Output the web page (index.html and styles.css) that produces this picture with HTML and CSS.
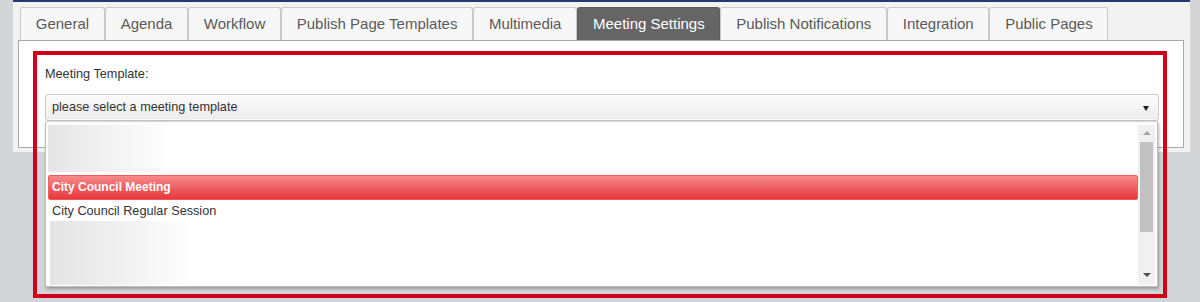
FILE: index.html
```html
<!DOCTYPE html>
<html lang="en">
<head>
<meta charset="utf-8">
<title>Meeting Settings</title>
<link rel="stylesheet" href="styles.css">
</head>
<body>
<div class="page">
  <div class="panel">
    <ul class="tabs">
      <li class="tab">General</li>
      <li class="tab">Agenda</li>
      <li class="tab">Workflow</li>
      <li class="tab">Publish Page Templates</li>
      <li class="tab">Multimedia</li>
      <li class="tab active">Meeting Settings</li>
      <li class="tab">Publish Notifications</li>
      <li class="tab">Integration</li>
      <li class="tab">Public Pages</li>
    </ul>
    <div class="tab-content">
      <div class="form">
        <div class="label">Meeting Template:</div>
        <div class="select-wrap">
          <div class="select">
            <span class="select-text">please select a meeting template</span>
            <span class="caret"></span>
          </div>
          <div class="dropdown">
            <div class="list">
              <div class="item blur blur-top"></div>
              <div class="item highlight">City Council Meeting</div>
              <div class="item">City Council Regular Session</div>
              <div class="item blur blur-bottom"></div>
            </div>
            <div class="scrollbar">
              <span class="sb-up"></span>
              <span class="sb-thumb"></span>
              <span class="sb-spacer"></span>
              <span class="sb-down"></span>
            </div>
          </div>
        </div>
      </div>
    </div>
  </div>
  <div class="annotation"></div>
</div>
</body>
</html>
```

FILE: styles.css
```css
* {
  box-sizing: border-box;
}

html, body {
  margin: 0;
  padding: 0;
}

body {
  background: #d3d4d6;
  font-family: "Liberation Sans", Arial, sans-serif;
  width: 1200px;
  height: 302px;
  overflow: hidden;
}

.page {
  position: relative;
  width: 1200px;
  height: 302px;
}

.panel {
  margin-left: 13px;
  width: 1177px;
  border-top: 2px solid #253a70;
  background: #f2f2f2;
  padding: 5px 6px 4px 5px;
}

.tabs {
  list-style: none;
  margin: 0;
  padding: 0 0 0 2px;
  display: flex;
  height: 33px;
}

.tab {
  height: 33px;
  padding: 0 14.75px;
  border: 1px solid #c9c9c9;
  border-bottom: none;
  border-radius: 3px 3px 0 0;
  background: #f7f7f7;
  color: #5a5a5a;
  font-size: 15px;
  line-height: 31px;
  white-space: nowrap;
}

.tab.active {
  background: #656565;
  border-color: #5c5c5c;
  color: #ffffff;
}

.tab-content {
  height: 108px;
  border: 1px solid #a9a9a9;
  background: #ffffff;
}

.form {
  padding: 26px 24px 0 26px;
}

.label {
  font-size: 12.7px;
  line-height: 15px;
  color: #333333;
  margin-bottom: 12px;
}

.select-wrap {
  position: relative;
}

.select {
  height: 27px;
  border: 1px solid #c6c6c6;
  border-radius: 3px;
  background: linear-gradient(#fbfbfb, #ececec);
  box-shadow: inset 0 0 0 1px rgba(255, 255, 255, 0.6);
  display: flex;
  align-items: center;
  justify-content: space-between;
  padding: 0 9px 0 6px;
}

.select-text {
  font-size: 12.7px;
  line-height: 25px;
  color: #333333;
}

.caret {
  width: 0;
  height: 0;
  border-left: 3.5px solid transparent;
  border-right: 3.5px solid transparent;
  border-top: 5px solid #1e1e1e;
  margin-top: 1px;
}

.dropdown {
  position: absolute;
  left: 0;
  top: 27px;
  width: 1113px;
  height: 166px;
  background: #ffffff;
  border: 1px solid #bdbdbd;
  border-top-color: #d6d6d6;
  box-shadow: 1px 2px 3px rgba(0, 0, 0, 0.28);
  padding: 3px 2px 1px 2px;
  display: flex;
  z-index: 2;
}

.list {
  flex: 1;
  display: flex;
  flex-direction: column;
}

.item {
  font-size: 12.7px;
  color: #333333;
  padding-left: 4px;
  line-height: 23px;
  height: 23px;
  white-space: nowrap;
}

.blur {
  background: linear-gradient(to right, #e5e5e5 0, #f2f2f2 60px, #ffffff 125px);
}

.blur-top {
  height: 47px;
  margin-bottom: 3px;
}

.blur-bottom {
  flex: 1;
  height: auto;
  margin-top: -2px;
  margin-left: 2px;
  background: linear-gradient(to right, #e4e4e4 0, #f1f1f1 75px, #ffffff 142px);
}

.highlight {
  height: 25px;
  line-height: 23px;
  border: 1px solid #ee5a5d;
  border-radius: 2px;
  background: linear-gradient(#f68a8a, #e8363b);
  color: #ffffff;
  font-weight: bold;
  font-size: 12px;
  padding-left: 3px;
}

.scrollbar {
  width: 17px;
  background: #f0f0f0;
  display: flex;
  flex-direction: column;
  align-items: center;
}

.sb-up {
  width: 0;
  height: 0;
  margin-top: 6px;
  border-left: 4px solid transparent;
  border-right: 4px solid transparent;
  border-bottom: 4px solid #a3a3a3;
}

.sb-thumb {
  width: 13px;
  height: 90px;
  margin-top: 7px;
  background: #c1c1c1;
}

.sb-spacer {
  flex: 1;
}

.sb-down {
  width: 0;
  height: 0;
  margin-bottom: 8px;
  border-left: 4px solid transparent;
  border-right: 4px solid transparent;
  border-top: 4px solid #505050;
}

.annotation {
  position: absolute;
  left: 33px;
  top: 51px;
  width: 1134px;
  height: 247px;
  border: 4px solid #d0021b;
  pointer-events: none;
  z-index: 3;
}
```
